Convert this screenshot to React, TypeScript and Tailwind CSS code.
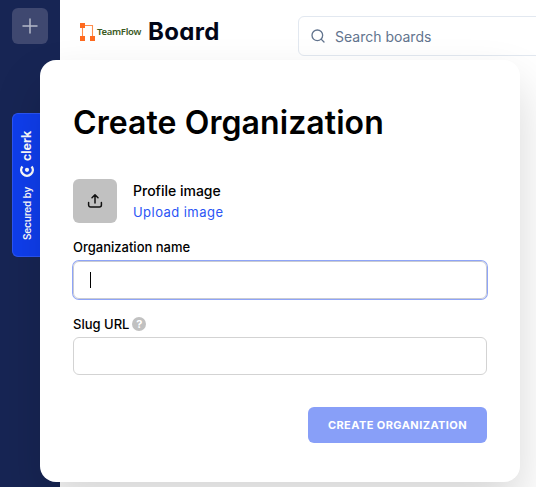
import React from "react";
import { Plus, Search } from "lucide-react";

function TeamFlowLogo() {
  return (
    <div className="flex w-[62px] shrink-0 items-start">
      <svg width="15" height="18" viewBox="0 0 15 18" className="shrink-0">
        <path d="M2.5 2.5V16M2.5 2.5H12.5V16" fill="none" stroke="#ff8d4e" strokeWidth="1.1" />
        <path d="M0 0h5v5H0zM0 13h5v5H0zM10 13h5v5h-5z" fill="#ff6a1f" />
      </svg>
      <span className="ml-[2px] mt-[2px] whitespace-nowrap font-['Noto_Sans',sans-serif] text-[9.5px] font-semibold leading-[14px] tracking-[-0.28px] text-[#3b5a1e]">TeamFlow</span>
    </div>
  );
}

function ClerkMark() {
  return (
    <svg width="14" height="14" viewBox="0 0 14 14">
      <path d="M10.6 2.4A5.8 5.8 0 1 0 10.6 11.6" fill="none" stroke="#fff" strokeWidth="2.4" />
      <circle cx="7.2" cy="7" r="2.1" fill="#fff" />
    </svg>
  );
}

function ClerkBadge() {
  return (
    <div className="absolute left-3 top-[113px] flex h-36 w-7 items-center justify-center rounded-l-md border border-r-0 border-[#2b55f5] bg-[#0f3eee] pt-[2px] text-white">
      <div className="flex -rotate-90 items-center whitespace-nowrap">
        <span className="w-[53px] text-[10px] font-semibold leading-none tracking-[-0.16px]">Secured by</span>
        <span className="ml-[10px] flex"><ClerkMark /></span>
        <span className="ml-[2px] w-[29px] text-[12.5px] font-bold leading-none tracking-[-0.1px]">clerk</span>
      </div>
    </div>
  );
}

function CreateOrganization() {
  return (
    <div className="absolute left-10 top-[60px] flex h-[422px] w-[480px] flex-col rounded-2xl bg-white px-[33px] text-black shadow-[0_24px_48px_rgba(0,0,0,0.16)]">
      <h1 className="mt-[43px] h-10 whitespace-nowrap text-[32px] font-semibold leading-10 tracking-[0.08px]">Create Organization</h1>
      <div className="mt-9 flex h-11 gap-4">
        <div className="flex size-11 items-center justify-center rounded-md bg-[#c1c1c1]">
          <svg width="16" height="16" viewBox="0 0 16 16" fill="none" stroke="#111" strokeWidth="1.5" strokeLinecap="round" strokeLinejoin="round">
            <path d="M8 10V2M5 4.8L8 1.8L11 4.8M1.6 9.5V12A2 2 0 0 0 3.6 14H12.4A2 2 0 0 0 14.4 12V9.5" />
          </svg>
        </div>
        <div className="flex flex-col whitespace-nowrap pt-0.5">
          <span className="text-sm font-medium leading-5">Profile image</span>
          <span className="mt-px text-[13px] leading-5 tracking-[0.45px] text-[#2b55f5]">Upload image</span>
        </div>
      </div>
      <label className="mt-4 h-4 text-[13px] font-medium leading-4">Organization name</label>
      <div className="mt-[6px] flex h-[38px] w-[414px] shrink-0 items-center rounded-md border border-[#c9cbd2] pl-4 shadow-[0_0_0_1px_#8ea4f8]">
        <span className="h-4 w-px bg-black" />
      </div>
      <label className="mt-[17px] flex h-4 items-center gap-[3px] text-[13px] font-medium leading-4">
        Slug URL
        <span className="flex size-[14px] items-center justify-center rounded-full bg-[#c1c1c1] text-[11px] font-bold leading-none text-white">?</span>
      </label>
      <div className="mt-[5px] h-[38px] w-[414px] shrink-0 rounded-md border border-[#d3d3d3]" />
      <button className="mt-8 h-9 w-[179px] shrink-0 self-end rounded-md bg-[#889ff8] text-[11px] font-bold tracking-[0.43px] text-white">CREATE ORGANIZATION</button>
    </div>
  );
}

export default function App() {
  return (
    <div className="relative h-[487px] w-[536px] overflow-hidden bg-white font-[Inter,sans-serif]">
      <div className="flex h-full">
        <aside className="w-[60px] shrink-0 bg-[#172554] pl-3 pt-2">
          <div className="flex size-9 items-center justify-center rounded-md bg-[#3f4870] text-[#b5b9c9]">
            <Plus size={24} strokeWidth={1.5} />
          </div>
        </aside>
        <header className="flex w-[520px] shrink-0 items-start">
          <div className="ml-5 mt-[23px]"><TeamFlowLogo /></div>
          <span className="ml-[6px] mt-4 w-[74px] text-2xl font-bold leading-8 tracking-[0.35px] text-[#020617] [font-feature-settings:'cv11']">Board</span>
          <div className="ml-[76px] mt-4 flex h-10 w-[260px] items-center rounded-md border border-slate-200 pl-3 text-sm text-slate-500">
            <Search size={16} strokeWidth={2} className="-ml-px" />
            <span className="ml-[9px] mt-0.5">Search boards</span>
          </div>
        </header>
      </div>
      <ClerkBadge />
      <CreateOrganization />
    </div>
  );
}
